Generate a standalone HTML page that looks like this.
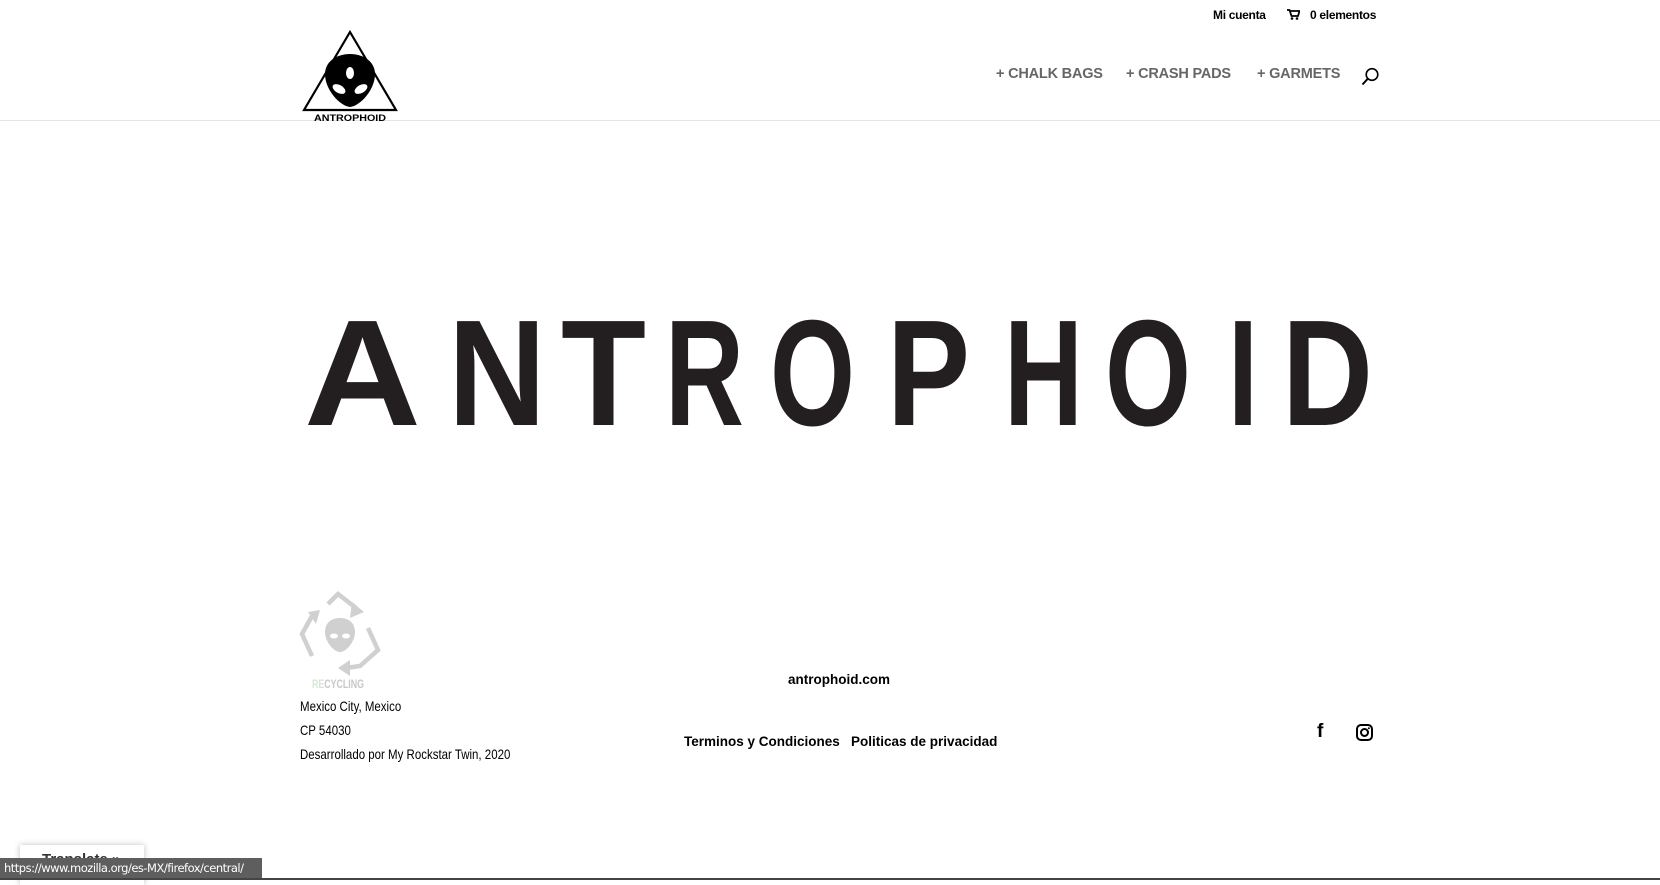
<!DOCTYPE html>
<html><head><meta charset="utf-8"><style>
*{margin:0;padding:0;box-sizing:border-box}
body{width:1660px;height:880px;overflow:hidden;background:#fff;font-family:"Liberation Sans",sans-serif;position:relative}
.abs{position:absolute;white-space:nowrap}
.top{font-weight:bold;font-size:12px;color:#000;top:8px;letter-spacing:-0.3px}
.nav{font-weight:bold;font-size:14.5px;color:#666;top:66px;letter-spacing:-0.2px}
.cond{font-family:"Liberation Sans Narrow","Liberation Sans",sans-serif;font-size:14px;color:#000;transform:scaleX(0.82);transform-origin:left}
.foot{font-weight:bold;font-size:13.5px;color:#000}
</style></head><body>
<div class="abs" style="left:0;top:120px;width:1660px;height:1px;background:#e5e5e5"></div>
<svg class="abs" style="left:300px;top:28px" width="100" height="96" viewBox="0 0 100 96">
<polygon points="50,4 96,82 4,82" fill="none" stroke="#000" stroke-width="2.2"/>
<path d="M50,26 C36,26 25,34 25,46 C25,62 40,78 50,79 C60,78 75,62 75,46 C75,34 64,26 50,26Z" fill="#000"/>
<ellipse cx="50" cy="45" rx="4" ry="6" fill="#fff"/>
<ellipse cx="39" cy="61" rx="7" ry="4" transform="rotate(30 39 61)" fill="#fff"/>
<ellipse cx="61" cy="61" rx="7" ry="4" transform="rotate(-30 61 61)" fill="#fff"/>
<text x="50" y="93" text-anchor="middle" font-family="Liberation Sans" font-size="9.5" font-weight="bold" textLength="72" lengthAdjust="spacingAndGlyphs">ANTROPHOID</text>
</svg>
<div class="abs top" style="left:1213px">Mi cuenta</div>
<svg class="abs" style="left:1287px;top:9px" width="13" height="11" viewBox="0 0 13 11"><path d="M0,1h2.5l2,6h6.5l1.5-5h-9" fill="none" stroke="#000" stroke-width="1.8"/><circle cx="5" cy="9.5" r="1.3"/><circle cx="10" cy="9.5" r="1.3"/></svg>
<div class="abs top" style="left:1310px">0 elementos</div>
<div class="abs nav" style="left:996px">+ CHALK BAGS</div>
<div class="abs nav" style="left:1126px">+ CRASH PADS</div>
<div class="abs nav" style="left:1257px">+ GARMETS</div>
<svg class="abs" style="left:1361px;top:67px" width="19" height="19" viewBox="0 0 19 19"><circle cx="11" cy="7.5" r="5.8" fill="none" stroke="#000" stroke-width="1.6"/><path d="M7,11.5 L1.5,17.5" stroke="#000" stroke-width="2"/></svg>
<svg class="abs" style="left:0;top:0" width="1660" height="500">
<g font-family="Liberation Sans" font-weight="bold" font-size="151" fill="#231f20">
<text x="304" y="425" textLength="117" lengthAdjust="spacingAndGlyphs">A</text>
<text x="448" y="425" textLength="98" lengthAdjust="spacingAndGlyphs">N</text>
<text x="561" y="425" textLength="85" lengthAdjust="spacingAndGlyphs">T</text>
<text x="665" y="425" textLength="79" lengthAdjust="spacingAndGlyphs">R</text>
<text x="770" y="425" textLength="85" lengthAdjust="spacingAndGlyphs">O</text>
<text x="887" y="425" textLength="83" lengthAdjust="spacingAndGlyphs">P</text>
<text x="1004" y="425" textLength="79" lengthAdjust="spacingAndGlyphs">H</text>
<text x="1105" y="425" textLength="86" lengthAdjust="spacingAndGlyphs">O</text>
<text x="1228" y="425" textLength="30" lengthAdjust="spacingAndGlyphs">I</text>
<text x="1282" y="425" textLength="91" lengthAdjust="spacingAndGlyphs">D</text>
</g></svg>
<svg class="abs" style="left:298px;top:590px" width="86" height="100" viewBox="0 0 86 100">
<g fill="none" stroke="#d0d0d0" stroke-width="4.5">
<path d="M30,14 L40,4 L58,18"/><path d="M14,26 L4,44 L14,66"/><path d="M70,38 L80,60 L62,76 L48,78"/></g>
<g fill="#d0d0d0"><polygon points="54,12 66,22 52,28"/><polygon points="10,22 22,20 18,34"/><polygon points="52,70 52,86 40,78"/></g>
<path d="M42,28 C32,28 27,34 27,42 C27,52 36,62 42,62 C48,62 57,52 57,42 C57,34 52,28 42,28Z" fill="#d0d0d0"/>
<ellipse cx="36" cy="46" rx="4" ry="2.5" fill="#fff"/><ellipse cx="48" cy="46" rx="4" ry="2.5" fill="#fff"/>
<text x="14" y="98" font-family="Liberation Sans" font-size="12" font-weight="bold" fill="#c8c8c8" textLength="52" lengthAdjust="spacingAndGlyphs"><tspan fill="#d8e6d8">RE</tspan>CYCLING</text>
</svg>
<div class="abs cond" style="left:300px;top:698px">Mexico City, Mexico</div>
<div class="abs cond" style="left:300px;top:722px">CP 54030</div>
<div class="abs cond" style="left:300px;top:746px">Desarrollado por My Rockstar Twin, 2020</div>
<div class="abs foot" style="left:788px;top:672px">antrophoid.com</div>
<div class="abs foot" style="left:684px;top:734px">Terminos y Condiciones &nbsp; Politicas de privacidad</div>
<div class="abs" style="left:1317px;top:721px;font-weight:bold;font-size:19px;color:#000">f</div>
<svg class="abs" style="left:1356px;top:724px" width="17" height="17" viewBox="0 0 17 17"><rect x="1" y="1" width="15" height="15" rx="4" fill="none" stroke="#000" stroke-width="2"/><circle cx="8.5" cy="8.5" r="3.5" fill="none" stroke="#000" stroke-width="2"/><circle cx="12.8" cy="4.2" r="1" fill="#000"/></svg>
<div class="abs" style="left:20px;top:845px;width:124px;height:40px;background:#fff;box-shadow:0 0 6px rgba(0,0,0,.25);font-weight:bold;font-size:15px;color:#333;padding:6px 0 0 22px">Translate »</div>
<div class="abs" style="left:0;top:858px;width:262px;height:20px;background:#5e5e5e;color:#fff;font-size:11.5px;padding:3px 0 0 4px;font-family:'DejaVu Sans',sans-serif;letter-spacing:-0.5px;overflow:hidden">https://www.mozilla.org/es-MX/firefox/central/</div>
<div class="abs" style="left:0;top:878px;width:1660px;height:2px;background:#444"></div>
</body></html>
